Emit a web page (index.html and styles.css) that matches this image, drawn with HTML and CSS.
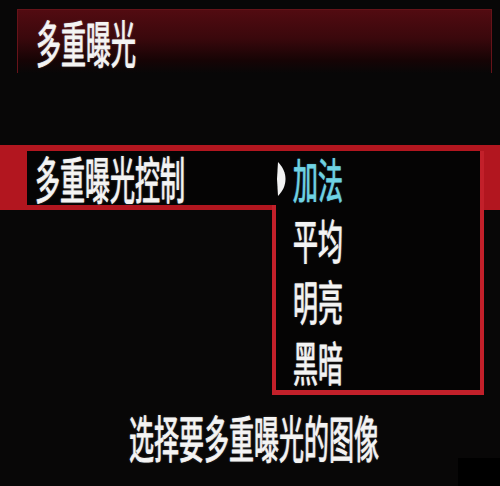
FILE: index.html
```html
<!DOCTYPE html>
<html lang="zh-CN">
<head>
<meta charset="utf-8">
<title>多重曝光</title>
<link rel="stylesheet" href="styles.css">
</head>
<body>
<div class="screen">
  <div class="title-bar">
    <span class="txt">多重曝光</span>
  </div>
  <div class="row">
    <div class="label"><span class="txt">多重曝光控制</span></div>
    <div class="submenu">
      <ul class="menu-list">
        <li class="item selected">
          <span class="marker"><svg width="9" height="34" viewBox="0 0 9 34"><path d="M1 0 C6 5 8.5 11 8.5 17 C8.5 23 6 29 1 34 L0 17 Z" fill="#f2f2f2"/></svg></span>
          <span class="txt">加法</span>
        </li>
        <li class="item"><span class="marker"></span><span class="txt">平均</span></li>
        <li class="item"><span class="marker"></span><span class="txt">明亮</span></li>
        <li class="item"><span class="marker"></span><span class="txt">黑暗</span></li>
      </ul>
    </div>
  </div>
  <div class="hint"><span class="txt">选择要多重曝光的图像</span></div>
  <div class="corner"></div>
</div>
</body>
</html>
```
FILE: styles.css
```css
html, body {
  margin: 0;
  padding: 0;
  background: #070707;
}
.screen {
  position: relative;
  width: 500px;
  height: 486px;
  overflow: hidden;
  background: #080707;
  font-family: "Noto Sans CJK SC", "Noto Sans", sans-serif;
  color: #f4f4f4;
}
.txt {
  display: block;
  width: max-content;
  height: 25px;
  margin: 12.5px 0;
  font-size: 25px;
  line-height: 25px;
  font-weight: 400;
  white-space: nowrap;
  transform: scaleY(2);
  transform-origin: left center;
  -webkit-text-stroke: 0.45px #f4f4f4;
  text-shadow: 0 0 1.5px rgba(255, 255, 255, 0.45);
}
.title-bar {
  box-sizing: border-box;
  margin: 9px 0 0 17px;
  width: 475px;
  height: 64px;
  padding: 6px 0 0 18px;
  border: 1px solid #661319;
  border-bottom: none;
  background: linear-gradient(to bottom, #520b11 0%, #3a080c 45%, #160405 80%, #080707 100%);
}
.row {
  position: relative;
  box-sizing: border-box;
  margin-top: 72px;
  height: 65px;
  padding: 6px 0 5px 27px;
  background: #b2161f;
  display: flex;
}
.label {
  box-sizing: border-box;
  width: 250px;
  height: 54px;
  padding: 1px 0 0 8px;
  background: #050404;
}
.submenu {
  position: absolute;
  left: 272px;
  top: 6px;
  box-sizing: border-box;
  width: 212px;
  height: 244px;
  padding-left: 4px;
  background: #050404;
  border-right: 4px solid #c2202a;
  border-bottom: 5px solid #c2202a;
}
.submenu::before {
  content: "";
  position: absolute;
  left: 0;
  top: 54px;
  bottom: 0;
  width: 4px;
  background: #c2202a;
}
.menu-list {
  list-style: none;
  margin: -3px 0 0 0;
  padding: 0;
}
.item {
  display: flex;
  align-items: center;
  height: 61px;
}
.item .txt {
  transform: scaleY(1.86);
}
.marker {
  display: flex;
  align-items: center;
  width: 17px;
  padding-left: 1px;
  box-sizing: border-box;
  flex: none;
}
.marker svg {
  display: block;
}
.selected .txt {
  color: #6fd3e4;
  -webkit-text-stroke-color: #6fd3e4;
  text-shadow: 0 0 1.5px rgba(111, 211, 228, 0.45);
}
.hint {
  margin-top: 214px;
  padding-left: 129px;
}
.corner {
  position: absolute;
  right: 0;
  bottom: 0;
  width: 42px;
  height: 28px;
  background: #000;
}
```
